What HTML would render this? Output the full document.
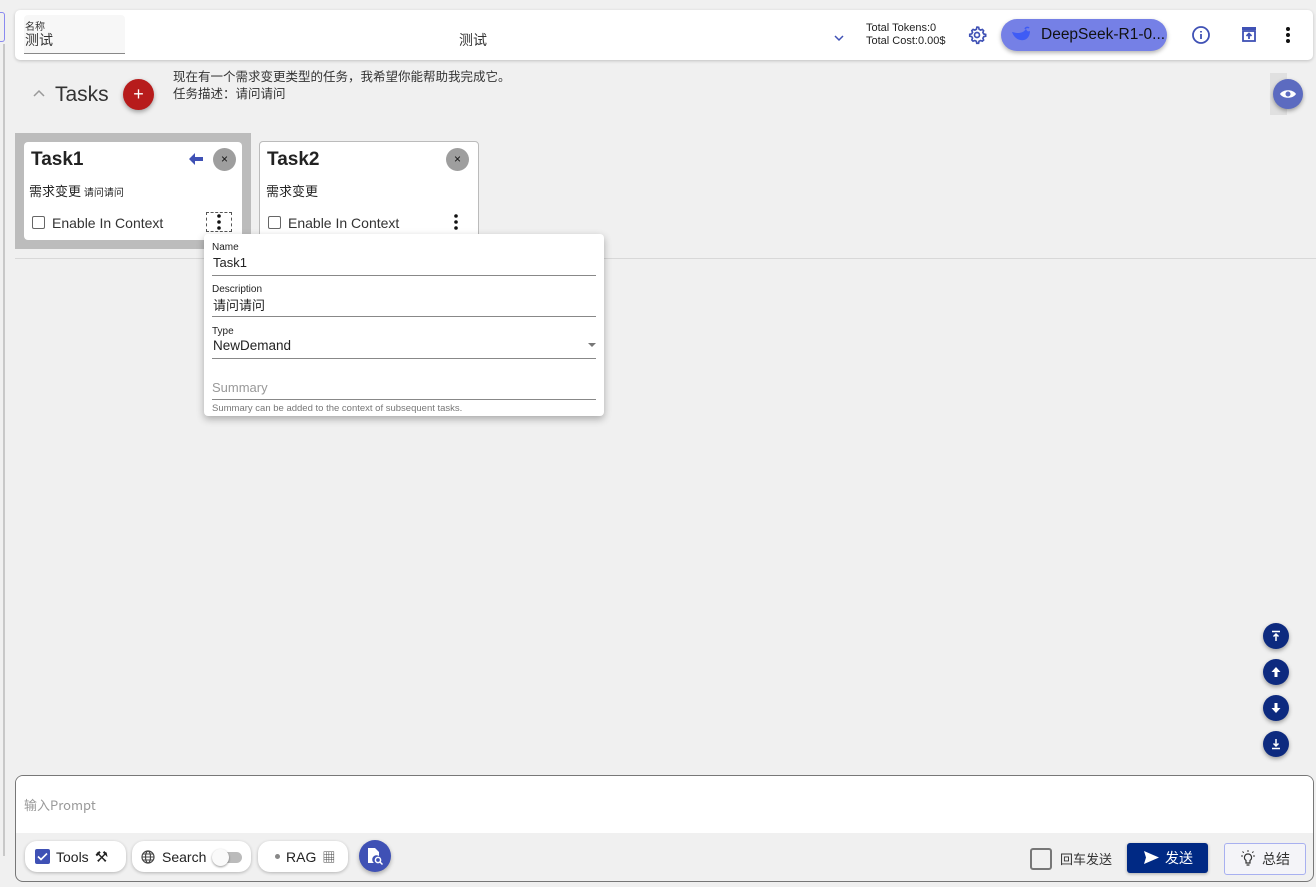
<!DOCTYPE html>
<html><head><meta charset="utf-8">
<style>
*{box-sizing:border-box;margin:0;padding:0}
body{width:1316px;height:887px;background:#f0f0f0;font-family:"Liberation Sans","Noto Sans CJK SC",sans-serif;color:#222;position:relative;overflow:hidden}
.abs{position:absolute}
.cjk{font-family:"Noto Sans CJK SC","Liberation Sans",sans-serif}
.fab{position:absolute;width:26px;height:26px;border-radius:50%;background:#0d2a7f;box-shadow:0 2px 4px rgba(0,0,0,.35);display:flex;align-items:center;justify-content:center}
.pill{position:absolute;top:841px;height:31px;background:#fff;border-radius:12px;box-shadow:0 1px 3px rgba(0,0,0,.25);display:flex;align-items:center;font-size:14px}
.cb{width:13px;height:13px;border:1.5px solid #666;border-radius:2px;display:inline-block}
</style></head><body>
<div class="abs" style="left:0;top:12px;width:5px;height:30px;border:1px solid #8a8af0;border-left:none;border-radius:0 3px 3px 0"></div>
<div class="abs" style="left:3px;top:44px;width:2px;height:812px;background:#c8c8c8"></div>

<!-- header -->
<div class="abs" style="left:15px;top:10px;width:1298px;height:50px;background:#fff;border-radius:5px;box-shadow:0 1px 3px rgba(0,0,0,.2)"></div>
<div class="abs" style="left:24px;top:15px;width:101px;height:39px;background:#f7f7f7;border-bottom:1px solid #888;border-radius:4px 4px 0 0"></div>
<div class="abs cjk" style="left:25px;top:18px;font-size:10px;color:#333">名称</div>
<div class="abs cjk" style="left:25px;top:30px;font-size:14px;color:#333">测试</div>
<div class="abs cjk" style="left:459px;top:30px;font-size:14px;color:#333">测试</div>
<svg class="abs" style="left:833px;top:33px" width="12" height="10" viewBox="0 0 12 10"><path d="M2 3l4 4 4-4" stroke="#3f51b5" stroke-width="1.5" fill="none"/></svg>
<div class="abs" style="left:866px;top:22px;font-size:11px;line-height:13px;color:#222">Total Tokens:0<br>Total Cost:0.00$</div>
<svg class="abs" style="left:967px;top:25px" width="20" height="20" viewBox="0 0 24 24"><path fill="none" stroke="#3f51b5" stroke-width="2" d="M12 2.5l2 .3.5 2.3 1.8 1 2.2-.8 1.4 1.5-.8 2.2 1 1.8 2.3.5v2.2l-2.3.5-1 1.8.8 2.2-1.5 1.4-2.2-.8-1.8 1-.5 2.300h-2.2l-.5-2.3-1.8-1-2.2.8-1.4-1.5.8-2.2-1-1.8-2.3-.5v-2.2l2.3-.5 1-1.8-.8-2.2 1.5-1.4 2.2.8 1.8-1 .5-2.3z"/><circle cx="12" cy="12" r="3" fill="none" stroke="#3f51b5" stroke-width="2"/></svg>
<div class="abs" style="left:1001px;top:19px;width:166px;height:32px;border-radius:16px;background:#7580e6;box-shadow:0 2px 4px rgba(0,0,0,.3)"></div>
<svg class="abs" style="left:1010px;top:26px" width="22" height="18" viewBox="0 0 22 18"><path d="M2 6c2 6 7 9 12 8 4-1 6-5 6-9-2 1-3 0-4-2-2 3-5 4-8 4S3 6 2 6z" fill="#3f5cf5"/><path d="M15 3c1-2 3-2 4-1" stroke="#3f5cf5" stroke-width="1.5" fill="none"/></svg>
<div class="abs" style="left:1041px;top:26px;font-size:15.5px;color:#111">DeepSeek-R1-0...</div>
<svg class="abs" style="left:1191px;top:25px" width="20" height="20" viewBox="0 0 20 20"><circle cx="10" cy="10" r="8" stroke="#3f51b5" stroke-width="1.8" fill="none"/><path d="M10 9v5M10 6v1.5" stroke="#3f51b5" stroke-width="1.8"/></svg>
<svg class="abs" style="left:1240px;top:25px" width="18" height="18" viewBox="0 0 18 18"><rect x="2" y="2" width="14" height="3" fill="#3f51b5"/><rect x="3" y="6" width="12" height="10" fill="none" stroke="#3f51b5" stroke-width="1.8"/><path d="M9 14V9M6.5 11L9 8.5 11.5 11" stroke="#3f51b5" stroke-width="1.8" fill="none"/></svg>
<svg class="abs" style="left:1284px;top:26px" width="8" height="18" viewBox="0 0 8 18"><circle cx="4" cy="3" r="2" fill="#111"/><circle cx="4" cy="9" r="2" fill="#111"/><circle cx="4" cy="15" r="2" fill="#111"/></svg>

<!-- tasks header -->
<svg class="abs" style="left:32px;top:89px" width="14" height="10" viewBox="0 0 14 10"><path d="M2 7l5-5 5 5" stroke="#999" stroke-width="1.5" fill="none"/></svg>
<div class="abs" style="left:55px;top:83px;font-size:21px;color:#333">Tasks</div>
<div class="abs" style="left:123px;top:79px;width:31px;height:31px;border-radius:50%;background:#b71c1c;box-shadow:0 2px 5px rgba(0,0,0,.35);color:#fff;font-size:18px;text-align:center;line-height:30px">+</div>
<div class="abs cjk" style="left:173px;top:67px;font-size:12.5px;line-height:17px;color:#333">现在有一个需求变更类型的任务，我希望你能帮助我完成它。<br>任务描述：请问请问</div>
<div class="abs" style="left:1270px;top:73px;width:17px;height:42px;background:#e0e0e0"></div>
<div class="abs" style="left:1273px;top:79px;width:30px;height:30px;border-radius:50%;background:#5c6bc0;box-shadow:0 2px 4px rgba(0,0,0,.35)"></div>
<svg class="abs" style="left:1279px;top:87px" width="18" height="14" viewBox="0 0 18 14"><path d="M1 7c3-5 13-5 16 0-3 5-13 5-16 0z" fill="#fff"/><circle cx="9" cy="7" r="2.5" fill="#5c6bc0"/></svg>

<!-- task cards -->
<div class="abs" style="left:15px;top:133px;width:236px;height:116px;background:#bcbcbc"></div>
<div class="abs" style="left:24px;top:142px;width:218px;height:98px;background:#fff;border-radius:4px"></div>
<div class="abs" style="left:31px;top:149px;font-size:19px;font-weight:bold;color:#222">Task1</div>
<svg class="abs" style="left:188px;top:152px" width="16" height="14" viewBox="0 0 16 14"><path d="M1 7l6-6v4h8v4H7v4z" fill="#3f51b5"/></svg>
<div class="abs" style="left:213px;top:148px;width:23px;height:23px;border-radius:50%;background:#9e9e9e;color:#111;font-size:12px;text-align:center;line-height:22px">×</div>
<div class="abs cjk" style="left:29px;top:181px;font-size:13px;color:#222">需求变更 <span style="font-size:10px">请问请问</span></div>
<div class="abs" style="left:32px;top:216px"><span class="cb"></span></div>
<div class="abs" style="left:52px;top:215px;font-size:14px;color:#333">Enable In Context</div>
<div class="abs" style="left:206px;top:212px;width:26px;height:20px;border:1px dashed #555"></div>
<svg class="abs" style="left:216px;top:213px" width="6" height="18" viewBox="0 0 6 18"><circle cx="3" cy="3" r="1.8" fill="#111"/><circle cx="3" cy="9" r="1.8" fill="#111"/><circle cx="3" cy="15" r="1.8" fill="#111"/></svg>

<div class="abs" style="left:259px;top:141px;width:220px;height:100px;background:#fff;border:1px solid #bbb;border-radius:4px"></div>
<div class="abs" style="left:267px;top:149px;font-size:19px;font-weight:bold;color:#222">Task2</div>
<div class="abs" style="left:446px;top:148px;width:23px;height:23px;border-radius:50%;background:#9e9e9e;color:#111;font-size:12px;text-align:center;line-height:22px">×</div>
<div class="abs cjk" style="left:266px;top:181px;font-size:13px;color:#222">需求变更</div>
<div class="abs" style="left:268px;top:216px"><span class="cb"></span></div>
<div class="abs" style="left:288px;top:215px;font-size:14px;color:#333">Enable In Context</div>
<svg class="abs" style="left:453px;top:213px" width="6" height="18" viewBox="0 0 6 18"><circle cx="3" cy="3" r="1.8" fill="#111"/><circle cx="3" cy="9" r="1.8" fill="#111"/><circle cx="3" cy="15" r="1.8" fill="#111"/></svg>
<div class="abs" style="left:15px;top:258px;width:1301px;height:1px;background:#d8d8d8"></div>

<!-- popup -->
<div class="abs" style="left:204px;top:234px;width:400px;height:182px;background:#fff;border-radius:4px;box-shadow:0 3px 8px rgba(0,0,0,.3)"></div>
<div class="abs" style="left:212px;top:242px;font-size:10px;color:#222">Name</div>
<div class="abs" style="left:213px;top:255px;font-size:13px;color:#222">Task1</div>
<div class="abs" style="left:212px;top:275px;width:384px;height:1px;background:#888"></div>
<div class="abs" style="left:212px;top:284px;font-size:10px;color:#222">Description</div>
<div class="abs cjk" style="left:213px;top:295px;font-size:13px;color:#222">请问请问</div>
<div class="abs" style="left:212px;top:316px;width:384px;height:1px;background:#888"></div>
<div class="abs" style="left:212px;top:326px;font-size:10px;color:#222">Type</div>
<div class="abs" style="left:213px;top:338px;font-size:13.5px;color:#222">NewDemand</div>
<div class="abs" style="left:588px;top:343px;border-left:4px solid transparent;border-right:4px solid transparent;border-top:4px solid #777"></div>
<div class="abs" style="left:212px;top:358px;width:384px;height:1px;background:#888"></div>
<div class="abs" style="left:212px;top:380px;font-size:13px;color:#999">Summary</div>
<div class="abs" style="left:212px;top:399px;width:384px;height:1px;background:#888"></div>
<div class="abs" style="left:212px;top:403px;font-size:9.5px;color:#777">Summary can be added to the context of subsequent tasks.</div>

<!-- scroll fabs -->
<div class="fab" style="left:1263px;top:623px"><svg width="12" height="12" viewBox="0 0 12 12"><path d="M2 1.5h8M6 11V4M3.5 6.5L6 4l2.5 2.5" stroke="#fff" stroke-width="1.5" fill="none"/></svg></div>
<div class="fab" style="left:1263px;top:659px"><svg width="12" height="12" viewBox="0 0 12 12"><path d="M6 1L1.5 6h3v5h3V6h3z" fill="#fff"/></svg></div>
<div class="fab" style="left:1263px;top:695px"><svg width="12" height="12" viewBox="0 0 12 12"><path d="M6 11L1.5 6h3V1h3v5h3z" fill="#fff"/></svg></div>
<div class="fab" style="left:1263px;top:731px"><svg width="12" height="12" viewBox="0 0 12 12"><path d="M2 10.5h8M6 1v7M3.5 5.5L6 8l2.5-2.5" stroke="#fff" stroke-width="1.5" fill="none"/></svg></div>

<!-- input -->
<div class="abs" style="left:15px;top:775px;width:1299px;height:107px;background:#f0f0f0;border:1px solid #777;border-radius:8px;overflow:hidden">
  <div style="height:57px;background:#fff"></div>
</div>
<div class="abs cjk" style="left:24px;top:795px;font-size:13px;color:#999">输入Prompt</div>

<div class="pill" style="left:25px;width:101px"><span style="margin-left:10px;width:15px;height:15px;background:#3f51b5;border-radius:2px;display:inline-flex;align-items:center;justify-content:center"><svg width="11" height="9" viewBox="0 0 11 9"><path d="M1 4.5l3 3 6-6" stroke="#fff" stroke-width="1.6" fill="none"/></svg></span><span style="margin-left:6px">Tools</span><span style="margin-left:6px;font-size:15px">⚒</span></div>
<div class="pill" style="left:132px;width:119px"><svg style="margin-left:9px" width="14" height="14" viewBox="0 0 14 14"><circle cx="7" cy="7" r="6" stroke="#444" fill="none" stroke-width="1.2"/><ellipse cx="7" cy="7" rx="2.5" ry="6" stroke="#444" fill="none" stroke-width="1.2"/><path d="M1 7h12M2 4h10M2 10h10" stroke="#444" stroke-width="1"/></svg><span style="margin-left:7px">Search</span><span style="position:relative;margin-left:6px;width:31px;height:14px;display:inline-block"><span style="position:absolute;left:4px;top:2px;width:26px;height:11px;border-radius:6px;background:#bbb"></span><span style="position:absolute;left:0;top:-1px;width:17px;height:17px;border-radius:50%;background:#fafafa;box-shadow:0 1px 2px rgba(0,0,0,.4)"></span></span></div>
<div class="pill" style="left:258px;width:90px"><span style="margin-left:17px;width:5px;height:5px;border-radius:50%;background:#888;display:inline-block"></span><span style="margin-left:6px">RAG</span><span style="margin-left:6px;font-size:13px;color:#444">▦</span></div>
<div class="abs" style="left:359px;top:840px;width:32px;height:32px;border-radius:50%;background:#3f51b5;box-shadow:0 2px 4px rgba(0,0,0,.3)"></div>
<svg class="abs" style="left:367px;top:847px" width="17" height="18" viewBox="0 0 17 18"><path d="M1 1h7l4 4v4a4 4 0 00-5 7H1z" fill="#fff"/><circle cx="11" cy="13" r="2.6" stroke="#fff" stroke-width="1.5" fill="none"/><path d="M13 15l2.5 2.5" stroke="#fff" stroke-width="1.5"/></svg>

<div class="abs" style="left:1030px;top:848px;width:22px;height:22px;border:2px solid #777;border-radius:3px"></div>
<div class="abs cjk" style="left:1060px;top:849px;font-size:13px;color:#333">回车发送</div>
<div class="abs" style="left:1127px;top:843px;width:81px;height:30px;background:#002984;border-radius:3px;box-shadow:0 1px 3px rgba(0,0,0,.3)"></div>
<svg class="abs" style="left:1144px;top:851px" width="15" height="13" viewBox="0 0 15 13"><path d="M0 0l15 6.5L0 13l2-6.5z" fill="#fff"/></svg>
<div class="abs cjk" style="left:1165px;top:848px;font-size:14px;color:#fff">发送</div>
<div class="abs" style="left:1224px;top:843px;width:82px;height:32px;border:1.5px solid #a8b0f0;border-radius:3px;background:#f4f4f8"></div>
<svg class="abs" style="left:1239px;top:850px" width="18" height="17" viewBox="0 0 18 17"><path d="M9 4a3.5 3.5 0 00-2 6.4V13h4v-2.6A3.5 3.5 0 009 4zM7.5 15h3" stroke="#333" stroke-width="1.2" fill="none"/><path d="M9 0v2M2 6h2M14 6h2M3.5 1.5l1.3 1.3M14.5 1.5l-1.3 1.3" stroke="#333" stroke-width="1"/></svg>
<div class="abs cjk" style="left:1262px;top:849px;font-size:14px;color:#333">总结</div>
</body></html>
